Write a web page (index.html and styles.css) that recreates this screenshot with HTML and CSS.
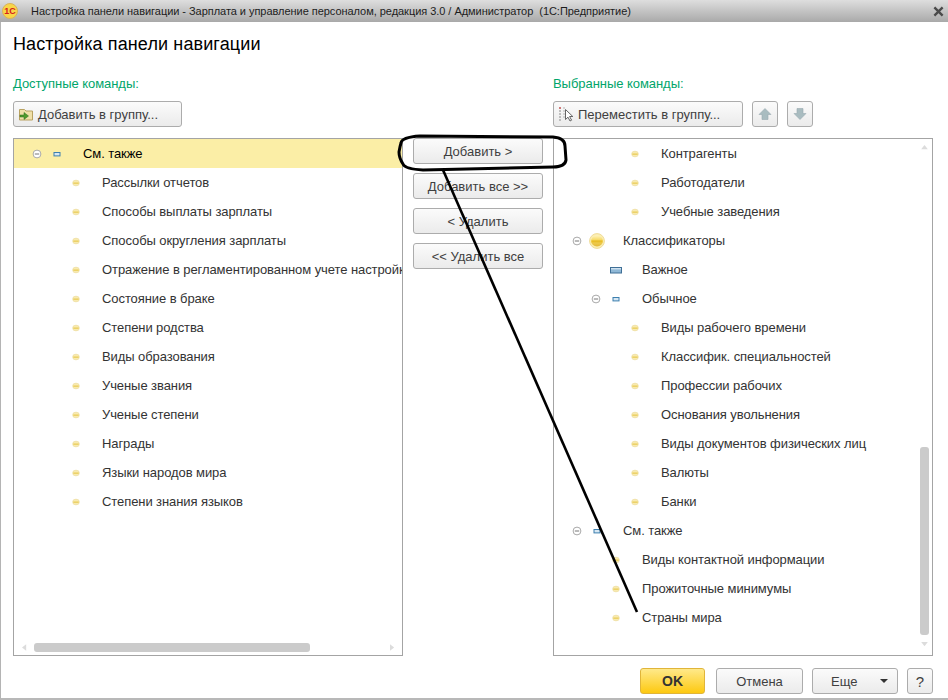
FILE: index.html
```html
<!DOCTYPE html>
<html lang="ru">
<head>
<meta charset="utf-8">
<title>Настройка панели навигации</title>
<link rel="stylesheet" href="styles.css">
</head>
<body>
<svg class="defs" width="0" height="0" aria-hidden="true">
  <defs>
    <linearGradient id="gy" x1="0" y1="0" x2="0" y2="1">
      <stop offset="0" stop-color="#fff2b8"/><stop offset=".45" stop-color="#f5d65a"/><stop offset="1" stop-color="#e3b93a"/>
    </linearGradient>
    <symbol id="dot" viewBox="0 0 20 20"><ellipse cx="10" cy="10" rx="3.4" ry="2.9" fill="#f8eab0" stroke="#e8d89c" stroke-width=".5"/><rect x="7.3" y="9.5" width="5.4" height="1.3" fill="#e9cc58"/></symbol>
    <symbol id="big" viewBox="0 0 20 20"><circle cx="10" cy="10" r="7.4" fill="#fbeeb4" stroke="#f0dc98"/><ellipse cx="10" cy="10" rx="6" ry="5.4" fill="url(#gy)"/><rect x="4.6" y="9.4" width="10.8" height="2" fill="#e8bd2a"/></symbol>
    <symbol id="mid" viewBox="0 0 20 20"><rect x="4.5" y="7.5" width="11" height="5.5" fill="#8fb8d6" stroke="#3f6f96"/><rect x="5" y="8" width="10" height="1.4" fill="#cfe2f0"/></symbol>
    <symbol id="small" viewBox="0 0 20 20"><rect x="7" y="8.5" width="6" height="3.4" fill="#d6e7f3" stroke="#3d7fae"/></symbol>
    <symbol id="exp" viewBox="0 0 20 20"><circle cx="10" cy="10" r="3.9" fill="#fff" stroke="#a9a9a9"/><path d="M7.8 10h4.4" stroke="#777" stroke-width="1"/></symbol>
  </defs>
</svg>
<div class="window">
  <header class="titlebar">
    <span class="logo">1С</span>
    <span class="caption">Настройка панели навигации - Зарплата и управление персоналом, редакция 3.0 / Администратор  (1С:Предприятие)</span>
    <svg class="close" viewBox="0 0 12 12" width="11" height="11"><path d="M1.5 1.5l9 9M10.5 1.5l-9 9" stroke="#4a4a4a" stroke-width="2.6"/></svg>
  </header>
  <main class="body">
    <h1 class="heading">Настройка панели навигации</h1>
    <div class="columns">
      <section class="col col-left">
        <div class="label">Доступные команды:</div>
        <div class="toolbar">
          <button class="btn btn-group-add">
            <svg class="ticon" viewBox="0 0 16 16" width="16" height="16"><path d="M1.5 3.5h5l1.5 1.5h6.5v9h-13z" fill="#f0e0a8" stroke="#b9a262"/><path d="M2 9h4V6.5L10.5 10 6 13.5V11H2z" fill="#4f9a2c" stroke="#2f6f1a" stroke-width=".5"/></svg>
            Добавить в группу...
          </button>
        </div>
        <div class="panel">
          <div class="row selected lvl0"><svg class="slot"><use href="#exp"/></svg><svg class="slot"><use href="#small"/></svg><span class="txt">См. также</span></div>
          <div class="row lvl1"><span class="slot"></span><svg class="slot"><use href="#dot"/></svg><span class="txt">Рассылки отчетов</span></div>
          <div class="row lvl1"><span class="slot"></span><svg class="slot"><use href="#dot"/></svg><span class="txt">Способы выплаты зарплаты</span></div>
          <div class="row lvl1"><span class="slot"></span><svg class="slot"><use href="#dot"/></svg><span class="txt">Способы округления зарплаты</span></div>
          <div class="row lvl1"><span class="slot"></span><svg class="slot"><use href="#dot"/></svg><span class="txt">Отражение в регламентированном учете настройка</span></div>
          <div class="row lvl1"><span class="slot"></span><svg class="slot"><use href="#dot"/></svg><span class="txt">Состояние в браке</span></div>
          <div class="row lvl1"><span class="slot"></span><svg class="slot"><use href="#dot"/></svg><span class="txt">Степени родства</span></div>
          <div class="row lvl1"><span class="slot"></span><svg class="slot"><use href="#dot"/></svg><span class="txt">Виды образования</span></div>
          <div class="row lvl1"><span class="slot"></span><svg class="slot"><use href="#dot"/></svg><span class="txt">Ученые звания</span></div>
          <div class="row lvl1"><span class="slot"></span><svg class="slot"><use href="#dot"/></svg><span class="txt">Ученые степени</span></div>
          <div class="row lvl1"><span class="slot"></span><svg class="slot"><use href="#dot"/></svg><span class="txt">Награды</span></div>
          <div class="row lvl1"><span class="slot"></span><svg class="slot"><use href="#dot"/></svg><span class="txt">Языки народов мира</span></div>
          <div class="row lvl1"><span class="slot"></span><svg class="slot"><use href="#dot"/></svg><span class="txt">Степени знания языков</span></div>
          <div class="hscroll">
            <svg class="arrow" viewBox="0 0 6 8" width="5" height="7"><path d="M5 0v8L0 4z" fill="#dcdcdc"/></svg>
            <div class="hthumb"></div>
            <svg class="arrow" viewBox="0 0 6 8" width="5" height="7"><path d="M0 0v8l5-4z" fill="#dcdcdc"/></svg>
          </div>
        </div>
      </section>
      <section class="col col-mid">
        <button class="btn mid-btn">Добавить &gt;</button>
        <button class="btn mid-btn">Добавить все &gt;&gt;</button>
        <button class="btn mid-btn">&lt; Удалить</button>
        <button class="btn mid-btn">&lt;&lt; Удалить все</button>
      </section>
      <section class="col col-right">
        <div class="label">Выбранные команды:</div>
        <div class="toolbar">
          <button class="btn btn-move">
            <svg class="ticon" viewBox="0 0 16 16" width="16" height="16"><path d="M1 2h2M1 5h2M1 8h2M1 11h2M1 14h2" stroke="#8a8a8a"/><path d="M1 2h2" stroke="#d33"/><path d="M5 2h2M5 5h2M5 8h2M5 11h2" stroke="#b5b5b5"/><path d="M7.5 3.5v10l2.5-2.3 2 3.8 1.6-.8-2-3.7h3.2z" fill="#fff" stroke="#555" stroke-width=".9"/></svg>
            Переместить в группу...
          </button>
          <button class="btn btn-icon"><svg viewBox="0 0 14 14" width="14" height="14"><path d="M7 1.5L13 7.5H10V12.5H4V7.5H1z" fill="#a9bcc0" stroke="#98aab0" stroke-width=".6"/></svg></button>
          <button class="btn btn-icon"><svg viewBox="0 0 14 14" width="14" height="14"><path d="M7 12.5L13 6.5H10V1.5H4V6.5H1z" fill="#a9bcc0" stroke="#98aab0" stroke-width=".6"/></svg></button>
        </div>
        <div class="panel">
          <div class="row lvl2"><span class="slot"></span><svg class="slot"><use href="#dot"/></svg><span class="txt">Контрагенты</span></div>
          <div class="row lvl2"><span class="slot"></span><svg class="slot"><use href="#dot"/></svg><span class="txt">Работодатели</span></div>
          <div class="row lvl2"><span class="slot"></span><svg class="slot"><use href="#dot"/></svg><span class="txt">Учебные заведения</span></div>
          <div class="row lvl0"><svg class="slot"><use href="#exp"/></svg><svg class="slot"><use href="#big"/></svg><span class="txt">Классификаторы</span></div>
          <div class="row lvl1"><span class="slot"></span><svg class="slot"><use href="#mid"/></svg><span class="txt">Важное</span></div>
          <div class="row lvl1"><svg class="slot"><use href="#exp"/></svg><svg class="slot"><use href="#small"/></svg><span class="txt">Обычное</span></div>
          <div class="row lvl2"><span class="slot"></span><svg class="slot"><use href="#dot"/></svg><span class="txt">Виды рабочего времени</span></div>
          <div class="row lvl2"><span class="slot"></span><svg class="slot"><use href="#dot"/></svg><span class="txt">Классифик. специальностей</span></div>
          <div class="row lvl2"><span class="slot"></span><svg class="slot"><use href="#dot"/></svg><span class="txt">Профессии рабочих</span></div>
          <div class="row lvl2"><span class="slot"></span><svg class="slot"><use href="#dot"/></svg><span class="txt">Основания увольнения</span></div>
          <div class="row lvl2"><span class="slot"></span><svg class="slot"><use href="#dot"/></svg><span class="txt">Виды документов физических лиц</span></div>
          <div class="row lvl2"><span class="slot"></span><svg class="slot"><use href="#dot"/></svg><span class="txt">Валюты</span></div>
          <div class="row lvl2"><span class="slot"></span><svg class="slot"><use href="#dot"/></svg><span class="txt">Банки</span></div>
          <div class="row lvl0"><svg class="slot"><use href="#exp"/></svg><svg class="slot"><use href="#small"/></svg><span class="txt">См. также</span></div>
          <div class="row lvl1"><span class="slot"></span><svg class="slot"><use href="#dot"/></svg><span class="txt">Виды контактной информации</span></div>
          <div class="row lvl1"><span class="slot"></span><svg class="slot"><use href="#dot"/></svg><span class="txt">Прожиточные минимумы</span></div>
          <div class="row lvl1"><span class="slot"></span><svg class="slot"><use href="#dot"/></svg><span class="txt">Страны мира</span></div>
          <div class="vscroll">
            <svg class="arrow" viewBox="0 0 8 6" width="7" height="5"><path d="M0 5h8L4 0z" fill="#dcdcdc"/></svg>
            <div class="vtrack"><div class="vthumb"></div></div>
            <svg class="arrow" viewBox="0 0 8 6" width="7" height="5"><path d="M0 0h8L4 5z" fill="#dcdcdc"/></svg>
          </div>
        </div>
      </section>
    </div>
    <footer class="footer">
      <button class="btn btn-ok">OK</button>
      <button class="btn btn-cancel">Отмена</button>
      <button class="btn btn-more"><span>Еще</span><i class="caret"></i></button>
      <button class="btn btn-help">?</button>
    </footer>
  </main>
  <svg class="annotation" viewBox="0 0 948 700" width="948" height="700" aria-hidden="true">
    <path d="M401 143 Q402 137 420 136 L553 137 Q565 138 565 146 L566 160 Q565 167 553 167 L423 170 Q405 169 403 164 Q399 158 399 152 Q400 146 401 143 Z" fill="none" stroke="#000" stroke-width="3" stroke-linejoin="round"/>
    <path d="M443 170 L637 612" fill="none" stroke="#000" stroke-width="2.6"/>
  </svg>
</div>
</body>
</html>
```
FILE: styles.css
```css
* { box-sizing: border-box; }
html, body { margin: 0; padding: 0; background: #fff; }
body { width: 948px; height: 700px; overflow: hidden; font-family: "Liberation Sans", Arial, sans-serif; font-size: 13px; color: #333; }
.defs { position: absolute; }
.window { position: relative; width: 948px; height: 700px; display: flex; flex-direction: column; border-left: 1px solid #b4b4b4; border-bottom: 2px solid #b8b8b8; }
.titlebar { height: 22px; margin-left: -1px; flex: none; display: flex; align-items: center; background: linear-gradient(#dedede, #a9a9a9); color: #1c1c1c; padding: 0 4px 0 2px; }
.logo { width: 16px; height: 16px; border-radius: 50%; background: #f9d648; border: 1px solid #d9b25a; color: #d5211c; font-size: 9px; font-weight: 700; line-height: 14px; text-align: center; flex: none; }
.caption { margin-left: 13px; font-size: 11px; letter-spacing: -0.04px; white-space: pre; flex: 1; }
.close { flex: none; }
.body { flex: 1; display: flex; flex-direction: column; padding: 0 14px 0 12px; }
.heading { margin: 12px 0 0; height: 20px; font-size: 18px; line-height: 20px; letter-spacing: .12px; font-weight: 400; color: #000; }
.columns { margin-top: 21px; display: flex; height: 581px; }
.label { height: 26px; line-height: 15px; padding-top: 1px; color: #00a56a; font-size: 13px; letter-spacing: -0.05px; }
.toolbar { display: flex; height: 26px; gap: 9px; margin-bottom: 11px; }
.col-left { width: 390px; flex: none; }
.col-mid { width: 150px; flex: none; padding: 63px 10px 0; display: flex; flex-direction: column; gap: 9px; }
.col-right { width: 380px; flex: none; }
.btn { height: 26px; padding: 0; border: 1px solid #acacac; border-radius: 3px; background: linear-gradient(#fbfbfb, #ebebeb); font: 13px "Liberation Sans", Arial, sans-serif; color: #3f3f3f; display: flex; align-items: center; justify-content: center; flex: none; }
.ticon { flex: none; margin-right: 4px; }
.btn-group-add { width: 169px; justify-content: flex-start; padding-left: 4px; }
.btn-move { width: 190px; justify-content: flex-start; padding-left: 4px; }
.btn-icon { width: 26px; }
.mid-btn { width: 130px; }
.panel { position: relative; height: 518px; border: 1px solid #a4a4a4; overflow: hidden; background: #fff; }
.row { height: 29px; display: flex; align-items: center; white-space: nowrap; }
.slot { width: 20px; height: 20px; flex: none; display: block; }
.txt { margin-left: 16px; letter-spacing: -0.08px; }
.lvl0 { padding-left: 13px; }
.lvl1 { padding-left: 32px; }
.lvl2 { padding-left: 51px; }
.selected { background: #fbeea6; color: #000; }
.arrow { display: block; flex: none; }
.hscroll { position: absolute; left: 8px; right: 7px; bottom: 3px; height: 10px; display: flex; align-items: center; }
.hthumb { width: 276px; height: 9px; margin: 0 auto 0 7px; background: #cbcbcb; border-radius: 3px; }
.vscroll { position: absolute; top: 6px; bottom: 8px; right: 3px; width: 9px; display: flex; flex-direction: column; align-items: center; }
.vtrack { flex: 1; width: 9px; display: flex; flex-direction: column; justify-content: flex-end; padding-bottom: 7px; }
.vthumb { height: 188px; width: 9px; background: #cbcbcb; border-radius: 3px; }
.footer { margin-top: 12px; display: flex; justify-content: flex-end; padding-right: 1px; height: 26px; }
.btn-ok { width: 65px; margin-right: 11px; border-color: #e0b53a; background: linear-gradient(#ffe98a, #fdc911); font-weight: 700; font-size: 14px; color: #333; }
.btn-cancel { width: 87px; margin-right: 9px; }
.btn-more { width: 86px; margin-right: 9px; padding: 0 9px 0 18px; justify-content: space-between; }
.caret { width: 0; height: 0; border: 4px solid transparent; border-top: 4px solid #333; border-bottom: 0; }
.btn-help { width: 26px; font-size: 15px; }
.annotation { position: absolute; left: -1px; top: 0; pointer-events: none; }
```
